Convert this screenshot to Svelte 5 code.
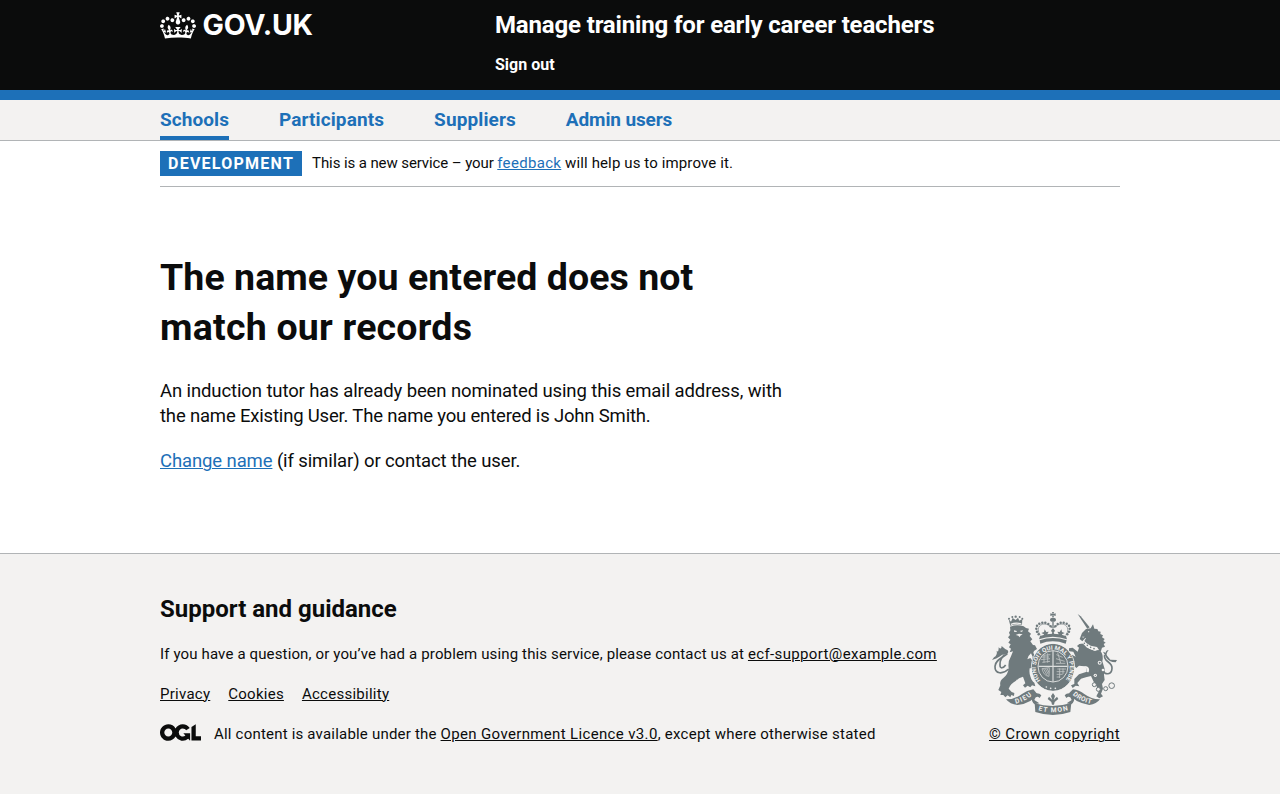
<script>
  const navItems = [
    { label: 'Schools', active: true },
    { label: 'Participants', active: false },
    { label: 'Suppliers', active: false },
    { label: 'Admin users', active: false }
  ];
  const footerLinks = ['Privacy', 'Cookies', 'Accessibility'];
  const beadsLeft = [[176, 103], [171, 95], [169, 86], [171, 77], [178, 71], [187, 68], [196, 68], [205, 72], [212, 79]];
  const chain = [[343, 254, 6], [355, 268, 6], [377, 266, 6], [395, 257, 8.5]];
</script>

<header class="header">
  <div class="container header-row">
    <a class="logo" href="#top">
      <svg class="crown" viewBox="0 0 132 97" width="36" height="27" aria-hidden="true">
        <path fill="currentColor" fill-rule="evenodd" d="M25 30.2c3.5 1.5 7.7-.2 9.1-3.7 1.5-3.6-.2-7.8-3.9-9.2-3.6-1.4-7.6.3-9.1 3.9-1.4 3.5.3 7.5 3.9 9zM9 39.5c3.6 1.5 7.8-.2 9.2-3.7 1.5-3.6-.2-7.8-3.9-9.1-3.6-1.5-7.6.2-9.1 3.8-1.4 3.5.3 7.5 3.8 9zM4.4 57.2c3.5 1.5 7.7-.2 9.1-3.8 1.5-3.6-.2-7.7-3.9-9.1-3.5-1.5-7.6.3-9.1 3.8-1.4 3.5.3 7.6 3.9 9.1zm38.3-21.4c3.5 1.5 7.7-.2 9.1-3.8 1.5-3.6-.2-7.7-3.9-9.1-3.6-1.5-7.6.3-9.1 3.8-1.3 3.6.4 7.7 3.9 9.1zm64.4-5.6c-3.6 1.5-7.8-.2-9.1-3.7-1.5-3.6.2-7.8 3.8-9.2 3.6-1.4 7.7.3 9.2 3.9 1.3 3.5-.4 7.5-3.9 9zm15.9 9.3c-3.6 1.5-7.7-.2-9.1-3.7-1.5-3.6.2-7.8 3.7-9.1 3.6-1.5 7.7.2 9.2 3.8 1.5 3.5-.3 7.5-3.8 9zm4.7 17.7c-3.6 1.5-7.8-.2-9.2-3.8-1.5-3.6.2-7.7 3.9-9.1 3.6-1.5 7.7.3 9.2 3.8 1.3 3.5-.4 7.6-3.9 9.1zM89.3 35.8c-3.6 1.5-7.8-.2-9.2-3.8-1.4-3.6.2-7.7 3.9-9.1 3.6-1.5 7.7.3 9.2 3.8 1.4 3.6-.3 7.7-3.9 9.1zM69.7 17.7l8.9 4.7V9.3l-8.9 2.8c-.2-.3-.5-.6-.9-.9L72.4 0H59.6l3.5 11.2c-.3.3-.6.5-.9.9l-8.8-2.8v13.1l8.8-4.7c.3.3.6.7.9.9l-5 15.4v.1c-.2.8-.4 1.6-.4 2.4 0 4.1 3.1 7.5 7 8.1h.2c.3 0 .7.1 1 .1.4 0 .7 0 1-.1h.2c4-.6 7.1-4.1 7.1-8.1 0-.8-.1-1.7-.4-2.4V34l-5.1-15.4c.4-.2.7-.6 1-.9zM66 92.8c16.9 0 32.8 1.1 47.1 3.2 4-16.9 8.9-26.7 14-33.5l-9.6-3.4c1 4.9 1.1 7.2 0 10.2-1.5-1.4-3-4.3-4.2-8.7L108.6 76c2.8-2 5-3.2 7.5-3.3-4.4 9.4-10 11.9-13.6 11.2-4.3-.8-6.3-4.6-5.6-7.9 1-4.7 5.7-5.9 8-.5 4.3-8.7-3-11.4-7.6-8.8 7.1-7.2 7.9-13.5 2.1-21.1-8 6.1-8.1 12.3-4.5 20.8-4.7-5.4-12.1-2.5-9.5 6.2 3.4-5.2 7.9-2 7.2 3.1-.6 4.3-6.4 7.8-13.5 7.2-10.3-.9-10.9-8-11.2-13.8 2.5-.5 7.1 1.8 11 7.3L80.2 60c-4.1 4.4-8 5.3-12.3 5.4 1.4-4.4 8-11.6 8-11.6H55.5s6.4 7.2 7.9 11.6c-4.2-.1-8-1-12.3-5.4l1.4 16.4c3.9-5.5 8.5-7.7 10.9-7.3-.3 5.8-.9 12.8-11.1 13.8-7.2.6-12.9-2.9-13.5-7.2-.7-5 3.8-8.3 7.1-3.1 2.7-8.7-4.6-11.6-9.4-6.2 3.7-8.5 3.6-14.7-4.6-20.8-5.8 7.6-5 13.9 2.2 21.1-4.7-2.6-11.9.1-7.7 8.8 2.3-5.5 7.1-4.2 8.1.5.7 3.3-1.3 7.1-5.7 7.9-3.5.7-9-1.8-13.5-11.2 2.5.1 4.7 1.3 7.5 3.3l-4.7-15.4c-1.2 4.4-2.7 7.2-4.3 8.7-1.1-3-.9-5.3 0-10.2l-9.5 3.4c5 6.9 9.9 16.7 14 33.5 14.8-2.1 30.8-3.2 47.7-3.2z" />
      </svg>
      <span class="logotype">GOV.UK</span>
    </a>
    <div class="header-content">
      <a class="service" href="#service">Manage training for early career teachers</a>
      <a class="signout" href="#signout">Sign out</a>
    </div>
  </div>
</header>

<nav class="nav">
  <div class="container nav-row">
    {#each navItems as item}
      <a class="nav-link" class:active={item.active} href="#nav">{item.label}</a>
    {/each}
  </div>
</nav>

<div class="container">
  <div class="phase">
    <strong class="tag">Development</strong>
    <span class="phase-text"><span class="pa">This is a new service – your{' '}</span><a class="pb" href="#feedback">feedback</a><span class="pc">{' '}will help us to improve it.</span></span>
  </div>
  <main class="main">
    <h1>The name you entered does not<br /><span class="wide">match our records</span></h1>
    <p><span>An induction tutor has already been nominated using this email address, with</span><br /><span class="tight">the name Existing User. The name you entered is John Smith.</span></p>
    <p><a href="#change">Change name</a> (if similar) or contact the user.</p>
  </main>
</div>

<footer class="footer">
  <div class="container footer-row">
    <div class="footer-main">
      <h2>Support and guidance</h2>
      <p class="question">If you have a question, or you’ve had a problem using this service, please contact us at <a class="mail" href="#mail">ecf-support@example.com</a></p>
      <ul>
        {#each footerLinks as link}
          <li><a href="#footer">{link}</a></li>
        {/each}
      </ul>
      <div class="licence">
        <svg viewBox="0 0 483.2 195.7" width="41" height="17" aria-hidden="true">
          <path fill="currentColor" d="M421.5 142.8V.1l-50.7 32.3v161.1h112.4v-50.7zm-122.3-9.6A47.12 47.12 0 0 1 221 97.8c0-26 21.1-47.1 47.1-47.1 16.7 0 31.4 8.7 39.7 21.8l42.7-27.2A97.63 97.63 0 0 0 268.1 0c-36.5 0-68.3 20.1-85.1 49.7A98 98 0 0 0 97.8 0C43.9 0 0 43.9 0 97.8s43.9 97.8 97.8 97.8c36.5 0 68.3-20.1 85.1-49.7a97.76 97.76 0 0 0 149.6 25.4l19.4 22.2h3v-87.8h-80l24.3 27.5zM97.8 145c-26 0-47.1-21.1-47.1-47.1s21.1-47.1 47.1-47.1 47.1 21.1 47.1 47.1S123.8 145 97.8 145" />
        </svg>
        <span><span class="la">All content is available under the{' '}</span><a class="lb" href="#ogl">Open Government Licence v3.0</a><span class="lc">, except where otherwise stated</span></span>
      </div>
    </div>
    <div class="copyright">
      <svg class="arms" viewBox="30 33 381 312" width="127" height="104" aria-hidden="true">
        <defs>
          <path id="motto" d="M182 241A51 54 0 1 1 255 241" />
          <path id="dieu" d="M107 311Q138 304 158 283" />
          <path id="etmon" d="M175 331Q219 343 266 330" />
          <path id="droit" d="M278 284Q300 305 336 312" />
        </defs>
        <g class="ink">
          <!-- lion -->
          <path d="M91 77L86 58L93 65L98 54L107 60L114 53L118 62L127 57L126 74Q108 70 91 77Z" />
          <circle cx="87" cy="56" r="3" /><circle cx="97" cy="51" r="3" /><circle cx="107" cy="50" r="3.5" /><circle cx="119" cy="51" r="3" /><circle cx="127" cy="56" r="3" />
          <path d="M90 80Q112 72 131 79L138 84L147 86L144 94L153 101L149 108L157 118L151 124L159 135L165 136L171 147L162 153L160 158L168 178L162 187L174 190L178 204L171 216L161 213L159 204L149 205Q147 218 151 229Q155 244 163 248L166 259L156 256L151 262L143 257L135 263L129 256L136 250L129 230Q116 233 108 242Q91 251 86 266L95 276L103 279L102 288L94 285L91 292L83 286L76 292L70 285L61 285L64 276L55 270L61 256Q58 242 70 234Q84 224 86 205Q83 185 93 169L99 154L89 157L93 146L87 142L92 133L85 128L91 119L84 112L90 105L87 98L91 91Z" />
          <path d="M42 172Q53 165 50 152Q56 160 56 142Q64 151 65 138Q74 147 83 151Q88 159 79 163Q65 163 58 170Q50 176 36 180Z" />
          <path class="line" d="M82 161C70 173 47 177 45 199C44 224 69 223 86 207" />
          <path class="line" d="M74 164C58 177 60 187 60 196C60 207 70 205 77 195" />
          <!-- unicorn -->
          <path d="M293 42L302 49L329 82L322 86Z" />
          <path d="M339 73L343 86L352 87L355 94L362 95L361 102L369 106L366 112L374 117L370 123L377 128L371 132L375 140L366 143L362 156L310 128L318 115L316 114L307 124L299 117L306 99L318 87L332 85Z" />
          <path d="M316 130L328 146L345 153L352 150L363 155Q371 166 367 184L374 207L372 225L374 240L366 252L369 266L363 281L369 289L358 295L349 289L356 275L351 261Q338 242 333 228Q317 232 303 236L292 249L298 259L287 257L278 264L273 256L283 252L283 237L297 223L318 216Q323 205 314 199L297 197L289 204L279 194L283 184L270 181L266 171L276 164L287 170L280 155L267 154L267 145L278 143L293 155L297 143L291 138L298 132Z" />
          <path d="M369 155L377 158Q378 150 386 150Q376 163 382 168L391 179L411 180L407 187Q386 185 379 173Q374 163 369 155Z" />
          <path class="line" d="M374 165C369 187 397 183 396 205C395 227 374 224 370 212" />
          <!-- imperial crown -->
          <path d="M180 108L177 118Q218 102 261 118L258 108Q218 94 180 108ZM179 121Q218 107 260 121L257 131Q218 117 181 131Z" />
          <path d="M216 36H222L220 42L227 40V48L220 46L222 52H216L218 46L211 48V40L218 42Z" />
          <ellipse cx="219" cy="59" rx="9" ry="6" />
          {#each beadsLeft as [x, y]}
            <circle cx={x} cy={y} r="3.7" /><circle cx={438 - x} cy={y} r="3.7" />
          {/each}
          <path d="M217 65H221V84H217ZM219 84L225 92L221 98L224 106H214L217 98L213 92ZM194 88L199 96L206 95L201 104L205 109H190L192 103L184 99L192 96ZM244 88L239 96L232 95L237 104L233 109H248L246 103L254 99L246 96Z" />
          <path class="arch" d="M181 106C168 88 177 73 192 72C204 72 212 78 216 84M257 106C270 88 261 73 246 72C234 72 226 78 222 84" />
          <!-- garter and shield -->
          <ellipse cx="219" cy="202" rx="64" ry="71" />
          <!-- scrolls -->
          <path d="M78 298Q103 299 126 282Q140 271 160 268L171 281Q158 309 112 315Q90 313 78 298Z" />
          <path d="M360 298Q336 299 314 283Q297 270 279 268L267 280Q281 307 328 315Q350 312 360 298Z" />
          <path d="M164 310Q218 326 274 309L271 336Q219 354 166 336Z" />
          <path d="M155 284Q175 275 184 286L179 294Q168 284 163 300L178 310L164 313Q153 305 155 284ZM283 284Q263 275 254 286L259 294Q270 284 275 300L260 310L274 313Q285 305 283 284Z" />
          <path d="M219 279L225 288L221 300L231 290L235 297L224 306L222 314H216L214 306L203 297L207 290L217 300L213 288Z" />
        </g>
        <!-- light details -->
        <g class="cut">
          <path d="M92 71Q108 65 124 70L124 73Q108 69 93 75Z" />
          <path d="M102 91L111 93L109 96L102 95ZM119 93L129 91L126 96ZM107 105L117 101L128 103L121 107L119 112L115 107Z" />
          <circle cx="326" cy="95" r="1.8" /><path d="M306 110L314 110L309 113Z" />
          <path d="M311 121L319 129L332 137L351 141L357 150L340 151L321 143L307 129Z" />
          <path d="M153 160Q145 166 142 178L151 174L156 181L158 170ZM319 199Q331 203 326 217L319 216Q323 206 312 198Z" />
          <circle cx="359" cy="188" r="6" /><circle cx="369" cy="210" r="4" /><circle cx="346" cy="226" r="5" />
        </g>
        <g class="ink">
          <circle cx="313" cy="130" r="2.4" /><circle cx="322" cy="136" r="2.4" /><circle cx="332" cy="142" r="2.4" /><circle cx="342" cy="146" r="2.4" />
          <circle cx="359" cy="188" r="3" /><circle cx="346" cy="226" r="2" />
        </g>
        <ellipse class="edge" cx="219" cy="202" rx="65" ry="72" />
        <ellipse class="edge" cx="219" cy="199" rx="45" ry="47" />
        <g class="quarters">
          <path d="M219 152V245M175 199H263" />
          <path class="fine" d="M184 171H207M182 179L210 176M187 187L210 184M190 166L211 164M229 164L248 172M228 176L254 184M233 158L242 189M228 190H256M232 207H258M230 215H254M230 223H248M230 231H240M239 205V234M249 205V222" />
          <path class="fine" d="M186 206L208 203L207 229Q191 228 186 206ZM191 207L202 227M196 206L205 223M201 205L207 218" />
          <path class="fine" d="M192 164V188M203 160V188" />
        </g>
        <circle class="dot" cx="199" cy="261" r="2.5" /><circle class="dot" cx="212" cy="265" r="2.5" /><circle class="dot" cx="226" cy="265" r="2.5" />
        <g class="script">
          <text class="motto"><textPath href="#motto" textLength="244" lengthAdjust="spacingAndGlyphs">HONI SOIT QUI MAL Y PENSE</textPath></text>
          <text><textPath href="#dieu" textLength="55">DIEU</textPath></text>
          <text><textPath href="#etmon" textLength="90">ET MON</textPath></text>
          <text><textPath href="#droit" textLength="62">DROIT</textPath></text>
        </g>
        {#each chain as [x, y, r]}
          <circle class="ring" cx={x} cy={y} {r} />
        {/each}
      </svg>
      <a class="crown-link" href="#copyright">© Crown copyright</a>
    </div>
  </div>
</footer>

<style>
  :global(body) {
    background: #fff;
    color: #0b0c0c;
    font-family: Roboto, "Open Sans", sans-serif;
    font-size: 15px;
    line-height: 20px;
  }
  a {
    color: inherit;
    text-decoration-thickness: 1px;
    text-underline-offset: 1px;
  }
  h1, h2, p, ul { margin: 0; padding: 0; }
  .container { width: 960px; margin: 0 auto; }
  .header {
    height: 90px;
    background: #0b0c0c;
    border-bottom: 10px solid #1d70b8;
    color: #fff;
  }
  .header a { text-decoration: none; }
  .header-row { display: flex; }
  .logo { display: flex; width: 335px; height: 50px; padding-top: 11px; box-sizing: border-box; }
  .crown { display: block; margin: 1px 6.5px 0 0; }
  .logotype { font: 700 28.5px/28px Inter, sans-serif; letter-spacing: -0.2px; }
  .header-content { display: flex; flex-direction: column; align-items: flex-start; padding-top: 10px; }
  .service { font-size: 24px; font-weight: 700; line-height: 30px; letter-spacing: -0.16px; }
  .signout { margin-top: 15px; font-size: 16px; font-weight: 700; line-height: 20px; }
  .nav { height: 40px; background: #f3f2f1; border-bottom: 1px solid #b1b4b6; }
  .nav-row { display: flex; gap: 50px; height: 40px; }
  .nav-link {
    box-sizing: border-box;
    height: 40px;
    color: #1d70b8;
    font-size: 19px;
    font-weight: 700;
    line-height: 40px;
    letter-spacing: 0.11px;
    text-decoration: none;
  }
  .nav-link:last-child { letter-spacing: -0.12px; }
  .active { border-bottom: 4px solid #1d70b8; letter-spacing: 0.07px; }
  .phase { display: flex; align-items: center; height: 45px; border-bottom: 1px solid #b1b4b6; }
  .tag {
    height: 25px;
    padding: 0 8px;
    margin-right: 10px;
    background: #1d70b8;
    color: #fff;
    font-size: 16px;
    line-height: 25px;
    letter-spacing: 1.25px;
    text-transform: uppercase;
  }
  .phase-text { padding-bottom: 2px; white-space: pre; }
  .phase-text a, .main a { color: #1d70b8; }
  .pa { letter-spacing: -0.1px; }
  .pb { letter-spacing: 0.32px; }
  .pc { letter-spacing: 0.12px; }
  .main { height: 301px; padding-top: 65px; font-size: 18.5px; line-height: 25px; letter-spacing: -0.11px; }
  h1 { margin-bottom: 27px; font-size: 37.5px; font-weight: 700; line-height: 50px; letter-spacing: 0.07px; }
  .wide { letter-spacing: 0.22px; }
  .tight { letter-spacing: -0.18px; }
  .main p { margin-bottom: 20px; white-space: nowrap; }
  .footer { height: 240px; background: #f3f2f1; border-top: 1px solid #b1b4b6; }
  .footer-row { display: flex; justify-content: space-between; }
  .footer-main { padding-top: 40px; white-space: nowrap; }
  h2 { margin-bottom: 20px; font-size: 24px; font-weight: 700; line-height: 30px; }
  .question { letter-spacing: 0.14px; }
  .mail { letter-spacing: 0.36px; }
  ul { display: flex; gap: 18px; margin: 20px 0; list-style: none; letter-spacing: 0.26px; }
  .licence { display: flex; gap: 13px; white-space: pre; }
  .licence svg { display: block; }
  .la { letter-spacing: 0.2px; }
  .lb { letter-spacing: 0.35px; }
  .lc { letter-spacing: 0.25px; }
  .copyright { display: flex; flex-direction: column; align-items: flex-end; padding-top: 57px; }
  .arms { display: block; margin-right: 3px; }
  .crown-link { margin-top: 9px; letter-spacing: 0.4px; white-space: nowrap; }
  .ink { fill: #6f7a7d; }
  .cut, .dot { fill: #f3f2f1; }
  .line, .arch { fill: none; stroke: #6f7a7d; stroke-width: 5; }
  .arch { stroke-width: 2; }
  .ring { fill: #f3f2f1; stroke: #6f7a7d; stroke-width: 3; }
  .edge { fill: none; stroke: #f3f2f1; stroke-width: 2.4; }
  .quarters { fill: none; stroke: #dcdedd; stroke-width: 3.5; }
  .fine { stroke: #c3c7c7; stroke-width: 2.4; }
  .script { fill: #f3f2f1; font: 700 20px Roboto, sans-serif; }
  .motto { font-size: 17.5px; }
</style>
